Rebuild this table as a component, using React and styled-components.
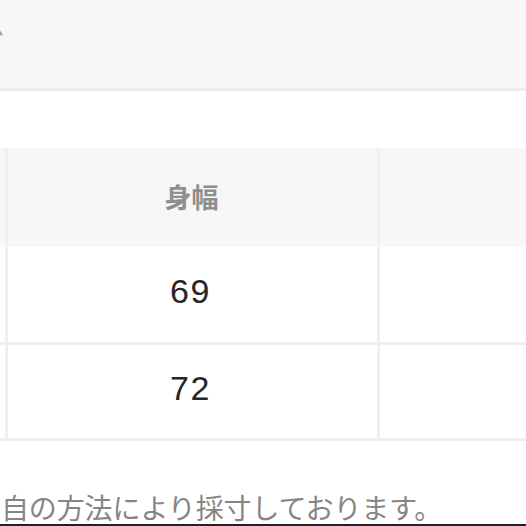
import React from 'react';
import styled, { createGlobalStyle } from 'styled-components';

const GlobalStyle = createGlobalStyle`
  html, body {
    margin: 0;
    padding: 0;
    background: #fff;
    overflow: hidden;
  }
  body {
    font-family: "Noto Sans CJK JP", "Noto Sans", sans-serif;
  }
`;

const Page = styled.div`
  width: 526px;
  height: 526px;
  overflow: hidden;
  display: flex;
  flex-direction: column;
`;

const Header = styled.header`
  height: 88px;
  flex-shrink: 0;
  background: #f7f7f7;
  border-bottom: 3px solid #ececec;
  display: flex;
  align-items: center;
`;

const Title = styled.h1`
  margin: 0 0 0 -91px;
  font-size: 32px;
  font-weight: 400;
  line-height: 1;
  color: #9a9a9a;
  white-space: nowrap;
`;

const Table = styled.div`
  margin: 57px 0 0 -195px;
  display: grid;
  grid-template-columns: 203px 372px 300px;
  grid-template-rows: 99px 98px 96px;
`;

const Cell = styled.div`
  box-sizing: border-box;
  display: flex;
  align-items: center;
  justify-content: center;
  background: ${p => (p.$head ? '#f7f7f7' : '#fff')};
  border-right: 3px solid ${p => (p.$head ? '#f1f1f1' : '#efefef')};
  border-bottom: 3px solid ${p => (p.$head ? '#f7f7f7' : '#efefef')};
`;

const HeadLabel = styled.span`
  font-size: 27px;
  font-weight: 700;
  color: #8f8f8f;
  line-height: 1;
  padding-top: 1px;
  margin-left: -2px;
`;

const Value = styled.span`
  font-family: "Liberation Sans", Arial, sans-serif;
  font-size: 34px;
  letter-spacing: 1.5px;
  color: #262626;
  line-height: 1;
  margin: -8px 0 0 -4px;
`;

const Note = styled.p`
  margin: 52px 0 0 -27px;
  font-size: 28px;
  line-height: 28px;
  color: #858585;
  white-space: nowrap;
  letter-spacing: -0.1px;
`;

const BottomEdge = styled.div`
  margin-top: auto;
  height: 2px;
  flex-shrink: 0;
  background: #222;
`;

const rows = [
  ['', '69', ''],
  ['', '72', ''],
];

export default function App() {
  return (
    <Page>
      <GlobalStyle />
      <Header>
        <Title>サイズ</Title>
      </Header>
      <Table>
        <Cell $head />
        <Cell $head>
          <HeadLabel>身幅</HeadLabel>
        </Cell>
        <Cell $head />
        {rows.map((row, i) =>
          row.map((v, j) => (
            <Cell key={`${i}-${j}`}>{v && <Value>{v}</Value>}</Cell>
          ))
        )}
      </Table>
      <Note>独自の方法により採寸しております。</Note>
      <BottomEdge />
    </Page>
  );
}
